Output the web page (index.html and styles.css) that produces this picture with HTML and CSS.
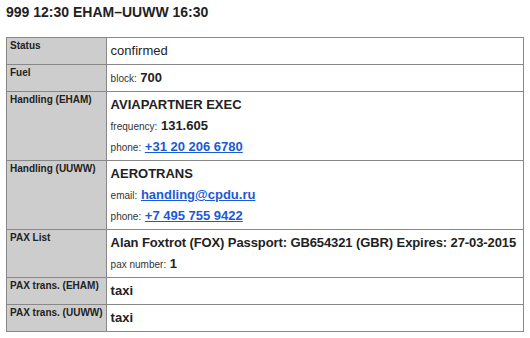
FILE: index.html
```html
<!DOCTYPE html>
<html lang="en">
<head>
  <meta charset="UTF-8" />
  <title>999 12:30 EHAM–UUWW 16:30</title>
  <link rel="stylesheet" href="styles.css">
</head>
<body>

  <h2 class="flight-title">999 12:30 EHAM–UUWW 16:30</h2>

  <table class="flight">
    <tr>
      <th class="label">Status</th>
      <td class="value"><div class="line">confirmed</div></td>
    </tr>
    <tr>
      <th class="label">Fuel</th>
      <td class="value"><div class="line"><span class="key">block:</span> <b>700</b></div></td>
    </tr>
    <tr>
      <th class="label">Handling (EHAM)</th>
      <td class="value">
        <div class="line"><b>AVIAPARTNER EXEC</b></div>
        <div class="line"><span class="key">frequency:</span> <b>131.605</b></div>
        <div class="line"><span class="key">phone:</span> <a href="#">+31 20 206 6780</a></div>
      </td>
    </tr>
    <tr>
      <th class="label">Handling (UUWW)</th>
      <td class="value">
        <div class="line"><b>AEROTRANS</b></div>
        <div class="line"><span class="key">email:</span> <a href="#">handling@cpdu.ru</a></div>
        <div class="line"><span class="key">phone:</span> <a href="#">+7 495 755 9422</a></div>
      </td>
    </tr>
    <tr>
      <th class="label">PAX List</th>
      <td class="value">
        <div class="line"><b class="pax">Alan Foxtrot (FOX) Passport: GB654321 (GBR) Expires: 27-03-2015</b></div>
        <div class="line"><span class="key">pax number:</span> <b>1</b></div>
      </td>
    </tr>
    <tr>
      <th class="label">PAX trans. (EHAM)</th>
      <td class="value"><div class="line"><b>taxi</b></div></td>
    </tr>
    <tr>
      <th class="label">PAX trans. (UUWW)</th>
      <td class="value"><div class="line"><b>taxi</b></div></td>
    </tr>
  </table>

</body>
</html>
```

FILE: styles.css
```css
html, body {
  background: #fff;
}

body {
  margin: 4px 6px;
  font-family: "Liberation Sans", Arial, sans-serif;
  color: #222;
}

.flight-title {
  font-size: 14px;
  line-height: 16px;
  font-weight: bold;
  margin: 0 0 17px 0;
}

.flight {
  width: 100%;
  border-collapse: collapse;
  border: 1px solid #888;
}

.flight th,
.flight td {
  border: 1px solid #888;
  vertical-align: top;
}

.label {
  width: 92px;
  background: #cdcdcd;
  font-size: 10px;
  font-weight: bold;
  text-align: left;
  white-space: nowrap;
  padding: 2px 3px 3px 3px;
}

.value {
  font-size: 13px;
  padding: 2px 4px 3px 4px;
}

.line {
  line-height: 21px;
  white-space: nowrap;
}

.key {
  font-size: 10px;
  line-height: 1;
  color: #333;
}

.pax {
  letter-spacing: -0.1px;
}

.value a {
  color: #1a5ad7;
  font-weight: bold;
  text-decoration: underline;
}
```
